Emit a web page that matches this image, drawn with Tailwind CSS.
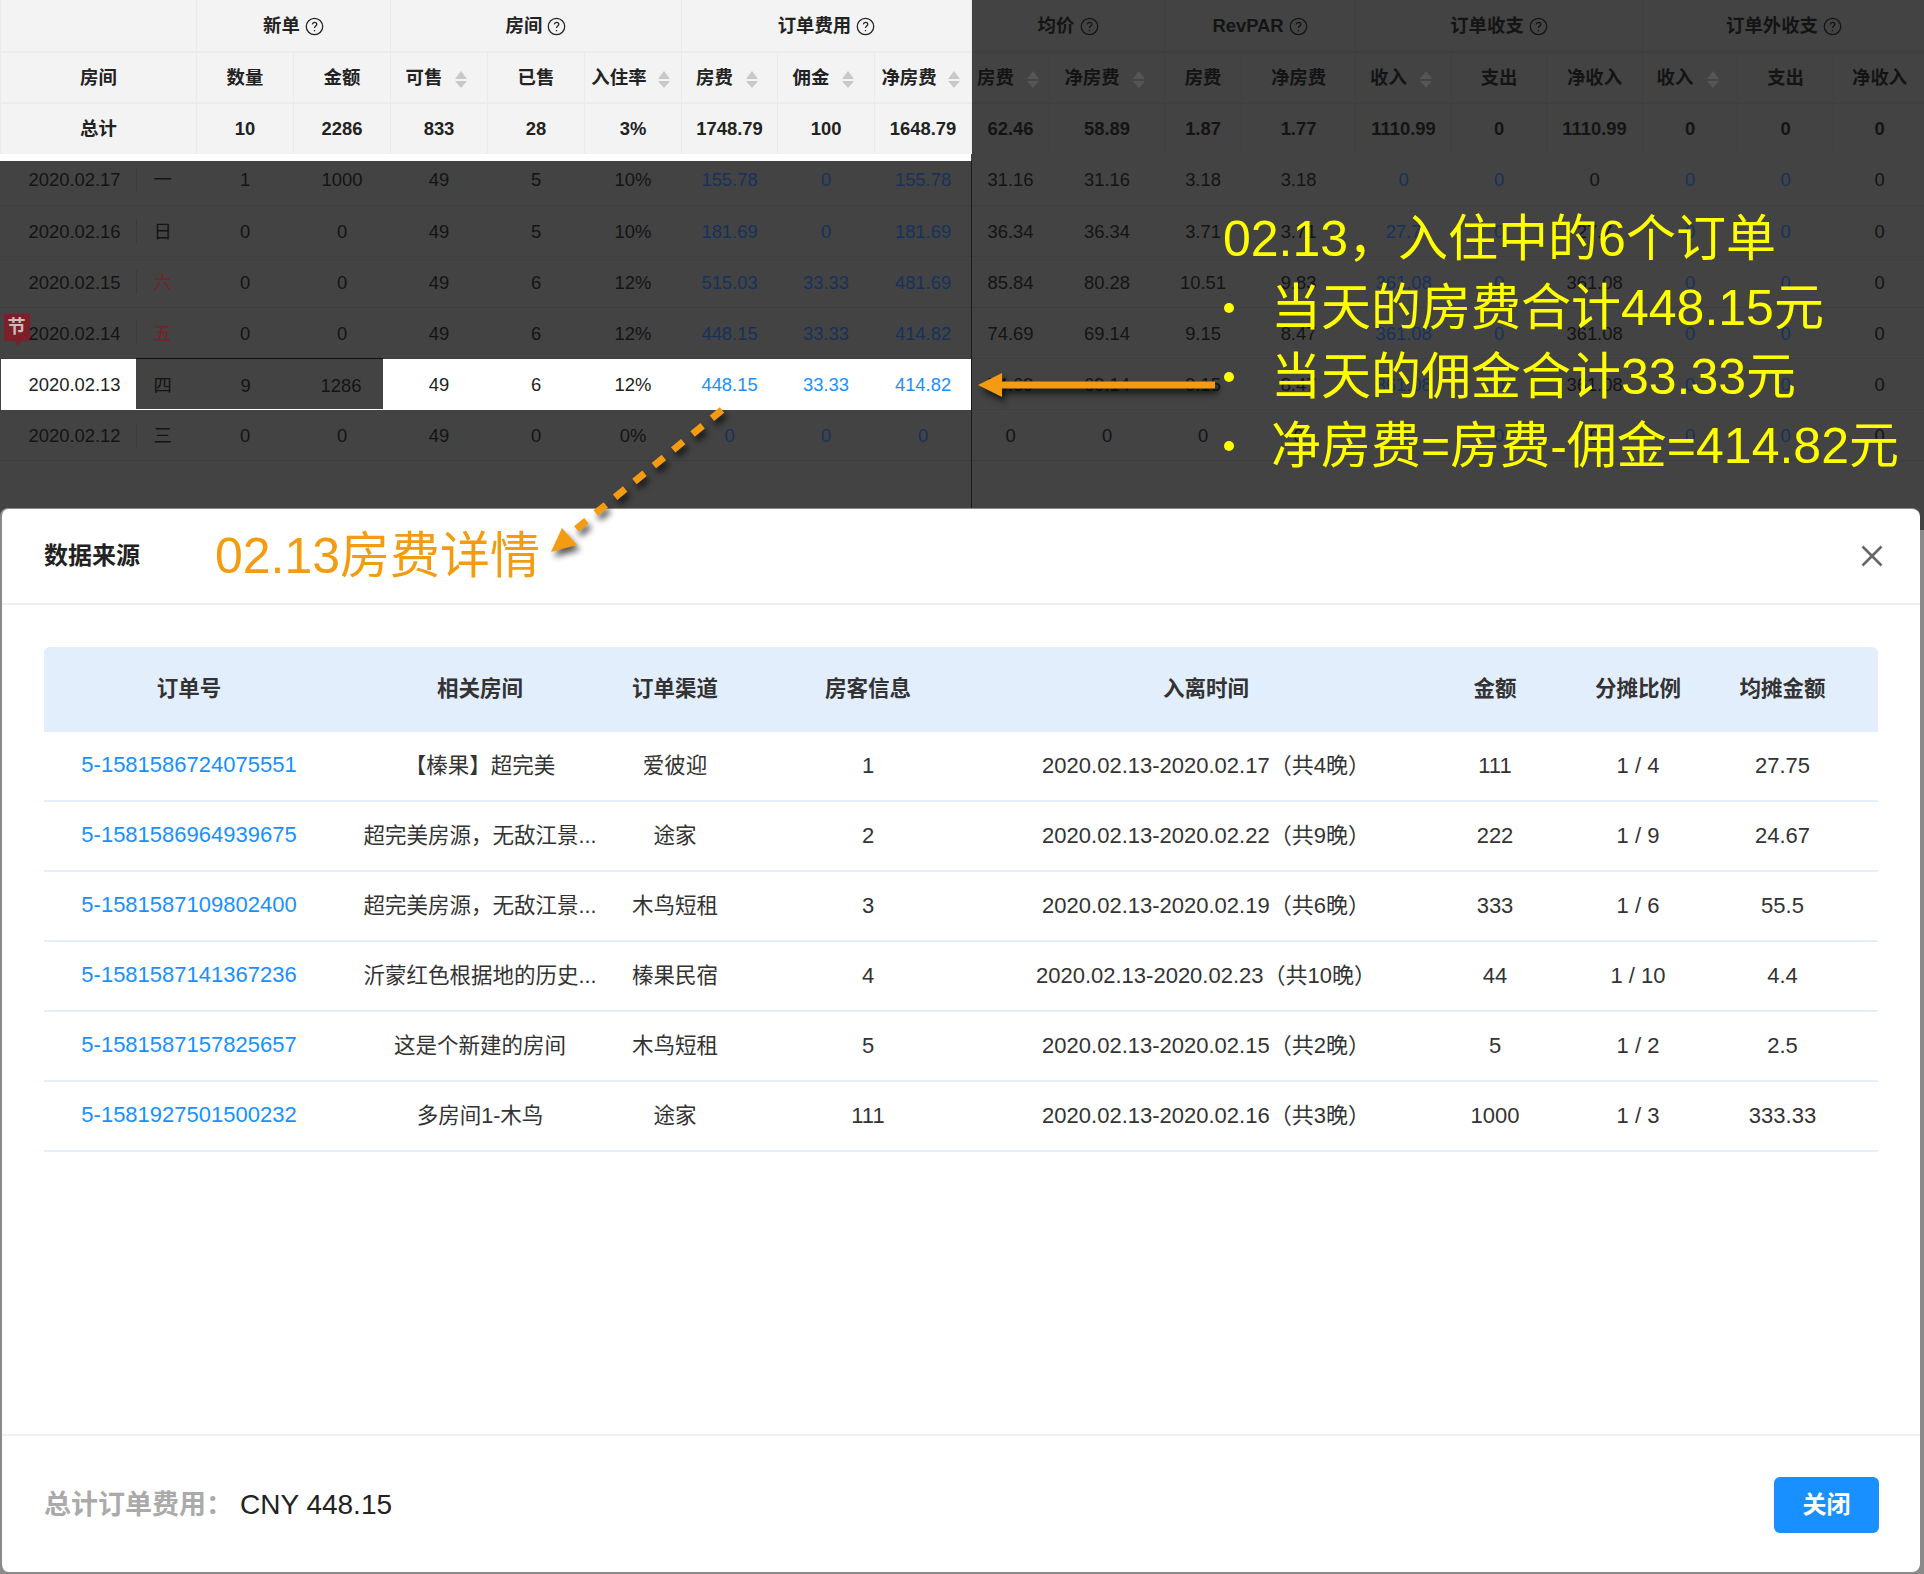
<!DOCTYPE html>
<html lang="zh">
<head>
<meta charset="utf-8">
<script src="https://cdn.jsdelivr.net/npm/@tailwindcss/browser@4"></script>
<title>数据来源</title>
</head>
<body class="bg-white font-['Liberation_Sans','Noto_Sans_CJK_SC',sans-serif]">
<div class="relative w-[1924px] h-[1574px] overflow-hidden bg-[#434343]">

  <!-- report table -->
  <table class="w-[1924px] table-fixed border-collapse text-center text-[18.4px] text-[#141414]">
    <colgroup>
      <col class="w-[196px]"><col class="w-[97px]"><col class="w-[97px]"><col class="w-[97px]"><col class="w-[97px]"><col class="w-[97px]"><col class="w-[96px]"><col class="w-[97px]"><col class="w-[97px]">
      <col class="w-[78px]"><col class="w-[115px]"><col class="w-[77px]"><col class="w-[114px]"><col class="w-[96px]"><col class="w-[95px]"><col class="w-[96px]"><col class="w-[95px]"><col class="w-[96px]"><col class="w-[92px]">
    </colgroup>
    <thead class="font-bold">
      <tr class="h-[52px] [&>th]:border-x [&>th]:border-b-2 [&>th:nth-child(-n+4)]:bg-[#f3f3f3] [&>th:nth-child(-n+4)]:border-[#ebebeb] [&>th:nth-child(n+5)]:border-[#3f3f3f] [&>th:nth-child(-n+4)]:text-[#222]">
        <th></th>
        <th colspan="2">新单 <svg class="inline-block w-[19px] h-[19px] align-[-4px]" viewBox="0 0 18 18" fill="none" stroke="currentColor" stroke-width="1.2"><circle cx="9" cy="9" r="7.8"/><path d="M6.9 7c.2-1.3 1-2 2.2-2 1.2 0 2.1.8 2.1 1.9 0 1.7-2.2 1.7-2.2 3.6M9 12.2v1.2"/></svg></th>
        <th colspan="3">房间 <svg class="inline-block w-[19px] h-[19px] align-[-4px]" viewBox="0 0 18 18" fill="none" stroke="currentColor" stroke-width="1.2"><circle cx="9" cy="9" r="7.8"/><path d="M6.9 7c.2-1.3 1-2 2.2-2 1.2 0 2.1.8 2.1 1.9 0 1.7-2.2 1.7-2.2 3.6M9 12.2v1.2"/></svg></th>
        <th colspan="3">订单费用 <svg class="inline-block w-[19px] h-[19px] align-[-4px]" viewBox="0 0 18 18" fill="none" stroke="currentColor" stroke-width="1.2"><circle cx="9" cy="9" r="7.8"/><path d="M6.9 7c.2-1.3 1-2 2.2-2 1.2 0 2.1.8 2.1 1.9 0 1.7-2.2 1.7-2.2 3.6M9 12.2v1.2"/></svg></th>
        <th colspan="2">均价 <svg class="inline-block w-[19px] h-[19px] align-[-4px]" viewBox="0 0 18 18" fill="none" stroke="currentColor" stroke-width="1.2"><circle cx="9" cy="9" r="7.8"/><path d="M6.9 7c.2-1.3 1-2 2.2-2 1.2 0 2.1.8 2.1 1.9 0 1.7-2.2 1.7-2.2 3.6M9 12.2v1.2"/></svg></th>
        <th colspan="2">RevPAR <svg class="inline-block w-[19px] h-[19px] align-[-4px]" viewBox="0 0 18 18" fill="none" stroke="currentColor" stroke-width="1.2"><circle cx="9" cy="9" r="7.8"/><path d="M6.9 7c.2-1.3 1-2 2.2-2 1.2 0 2.1.8 2.1 1.9 0 1.7-2.2 1.7-2.2 3.6M9 12.2v1.2"/></svg></th>
        <th colspan="3">订单收支 <svg class="inline-block w-[19px] h-[19px] align-[-4px]" viewBox="0 0 18 18" fill="none" stroke="currentColor" stroke-width="1.2"><circle cx="9" cy="9" r="7.8"/><path d="M6.9 7c.2-1.3 1-2 2.2-2 1.2 0 2.1.8 2.1 1.9 0 1.7-2.2 1.7-2.2 3.6M9 12.2v1.2"/></svg></th>
        <th colspan="3">订单外收支 <svg class="inline-block w-[19px] h-[19px] align-[-4px]" viewBox="0 0 18 18" fill="none" stroke="currentColor" stroke-width="1.2"><circle cx="9" cy="9" r="7.8"/><path d="M6.9 7c.2-1.3 1-2 2.2-2 1.2 0 2.1.8 2.1 1.9 0 1.7-2.2 1.7-2.2 3.6M9 12.2v1.2"/></svg></th>
      </tr>
      <tr class="h-[51px] [&>th]:border-x [&>th]:border-b-2 [&>th:nth-child(-n+9)]:bg-[#f3f3f3] [&>th:nth-child(-n+9)]:border-[#ebebeb] [&>th:nth-child(n+10)]:border-[#3f3f3f] [&>th:nth-child(-n+9)]:text-[#222] [&>th]:whitespace-nowrap [&>th]:font-bold">
        <th>房间</th><th>数量</th><th>金额</th>
        <th>可售 <span class="inline-block ml-2 mr-[5px] align-[-4px] text-[0]"><span class="block border-x-[6px] border-b-[8px] border-x-transparent border-b-[#c8c8c8] mb-[2px]"></span><span class="block border-x-[6px] border-t-[7px] border-x-transparent border-t-[#c8c8c8]"></span></span></th>
        <th>已售</th>
        <th>入住率 <span class="inline-block ml-1.5 mr-[5px] align-[-4px] text-[0]"><span class="block border-x-[6px] border-b-[8px] border-x-transparent border-b-[#c8c8c8] mb-[2px]"></span><span class="block border-x-[6px] border-t-[7px] border-x-transparent border-t-[#c8c8c8]"></span></span></th>
        <th>房费 <span class="inline-block ml-2 mr-[5px] align-[-4px] text-[0]"><span class="block border-x-[6px] border-b-[8px] border-x-transparent border-b-[#c8c8c8] mb-[2px]"></span><span class="block border-x-[6px] border-t-[7px] border-x-transparent border-t-[#c8c8c8]"></span></span></th>
        <th>佣金 <span class="inline-block ml-2 mr-[5px] align-[-4px] text-[0]"><span class="block border-x-[6px] border-b-[8px] border-x-transparent border-b-[#c8c8c8] mb-[2px]"></span><span class="block border-x-[6px] border-t-[7px] border-x-transparent border-t-[#c8c8c8]"></span></span></th>
        <th>净房费 <span class="inline-block ml-1.5 mr-[5px] align-[-4px] text-[0]"><span class="block border-x-[6px] border-b-[8px] border-x-transparent border-b-[#c8c8c8] mb-[2px]"></span><span class="block border-x-[6px] border-t-[7px] border-x-transparent border-t-[#c8c8c8]"></span></span></th>
        <th>房费 <span class="inline-block ml-2 mr-[5px] align-[-4px] text-[0]"><span class="block border-x-[6px] border-b-[8px] border-x-transparent border-b-[#555] mb-[2px]"></span><span class="block border-x-[6px] border-t-[7px] border-x-transparent border-t-[#555]"></span></span></th>
        <th>净房费 <span class="inline-block ml-2 mr-[5px] align-[-4px] text-[0]"><span class="block border-x-[6px] border-b-[8px] border-x-transparent border-b-[#555] mb-[2px]"></span><span class="block border-x-[6px] border-t-[7px] border-x-transparent border-t-[#555]"></span></span></th>
        <th>房费</th><th>净房费</th>
        <th>收入 <span class="inline-block ml-2 mr-[5px] align-[-4px] text-[0]"><span class="block border-x-[6px] border-b-[8px] border-x-transparent border-b-[#555] mb-[2px]"></span><span class="block border-x-[6px] border-t-[7px] border-x-transparent border-t-[#555]"></span></span></th>
        <th>支出</th><th>净收入</th>
        <th>收入 <span class="inline-block ml-2 mr-[5px] align-[-4px] text-[0]"><span class="block border-x-[6px] border-b-[8px] border-x-transparent border-b-[#555] mb-[2px]"></span><span class="block border-x-[6px] border-t-[7px] border-x-transparent border-t-[#555]"></span></span></th>
        <th>支出</th><th>净收入</th>
      </tr>
      <tr class="h-[51px] [&>th]:border-x [&>th:nth-child(-n+9)]:bg-[#f3f3f3] [&>th:nth-child(-n+9)]:border-[#ebebeb] [&>th:nth-child(n+10)]:border-[#3f3f3f] [&>th:nth-child(-n+9)]:text-[#222]">
        <th>总计</th><th>10</th><th>2286</th><th>833</th><th>28</th><th>3%</th><th>1748.79</th><th>100</th><th>1648.79</th>
        <th>62.46</th><th>58.89</th><th>1.87</th><th>1.77</th><th>1110.99</th><th>0</th><th>1110.99</th><th>0</th><th>0</th><th>0</th>
      </tr>
    </thead>
    <tbody class="[&_tr]:h-[51px] [&_tr]:border-b [&_tr]:border-[#3e3e3e] [&_td]:pt-[2px] [&_.a]:text-[#16325c]">
      <tr>
        <td class="relative"><span class="absolute left-[28px] top-[12px]">2020.02.17</span><span class="absolute left-[135px] top-[13px] h-[24px] border-l border-[#3a3a3a]"></span><span class="absolute left-[153px] top-[12px]">一</span></td>
        <td>1</td><td>1000</td><td>49</td><td>5</td><td>10%</td><td class="a">155.78</td><td class="a">0</td><td class="a">155.78</td>
        <td>31.16</td><td>31.16</td><td>3.18</td><td>3.18</td><td class="a">0</td><td class="a">0</td><td>0</td><td class="a">0</td><td class="a">0</td><td>0</td>
      </tr>
      <tr>
        <td class="relative"><span class="absolute left-[28px] top-[12px]">2020.02.16</span><span class="absolute left-[135px] top-[13px] h-[24px] border-l border-[#3a3a3a]"></span><span class="absolute left-[153px] top-[12px]">日</span></td>
        <td>0</td><td>0</td><td>49</td><td>5</td><td>10%</td><td class="a">181.69</td><td class="a">0</td><td class="a">181.69</td>
        <td>36.34</td><td>36.34</td><td>3.71</td><td>3.71</td><td class="a">27.7</td><td class="a">0</td><td>27.7</td><td class="a">0</td><td class="a">0</td><td>0</td>
      </tr>
      <tr>
        <td class="relative"><span class="absolute left-[28px] top-[12px]">2020.02.15</span><span class="absolute left-[135px] top-[13px] h-[24px] border-l border-[#3a3a3a]"></span><span class="absolute left-[153px] top-[12px] text-[#7b2028]">六</span></td>
        <td>0</td><td>0</td><td>49</td><td>6</td><td>12%</td><td class="a">515.03</td><td class="a">33.33</td><td class="a">481.69</td>
        <td>85.84</td><td>80.28</td><td>10.51</td><td>9.83</td><td class="a">361.08</td><td class="a">0</td><td>361.08</td><td class="a">0</td><td class="a">0</td><td>0</td>
      </tr>
      <tr>
        <td class="relative"><span class="absolute left-[3px] top-[6px] flex h-[27px] w-[26px] items-center justify-center rounded-[2px] bg-[#7b2028] text-[18px] font-bold leading-none text-[#c9bcbc]">节</span><span class="absolute left-[13px] top-[32px] border-x-[4px] border-t-[6px] border-x-transparent border-t-[#7b2028]"></span><span class="absolute left-[28px] top-[12px]">2020.02.14</span><span class="absolute left-[135px] top-[13px] h-[24px] border-l border-[#3a3a3a]"></span><span class="absolute left-[153px] top-[12px] text-[#7b2028]">五</span></td>
        <td>0</td><td>0</td><td>49</td><td>6</td><td>12%</td><td class="a">448.15</td><td class="a">33.33</td><td class="a">414.82</td>
        <td>74.69</td><td>69.14</td><td>9.15</td><td>8.47</td><td class="a">361.08</td><td class="a">0</td><td>361.08</td><td class="a">0</td><td class="a">0</td><td>0</td>
      </tr>
      <tr class="[&>td:nth-child(-n+9)]:bg-white [&>td:nth-child(-n+9)]:border-b [&>td:nth-child(-n+9)]:border-white">
        <td class="relative text-[#222]"><span class="absolute left-[28px] top-[12px]">2020.02.13</span><span class="absolute left-[135px] top-[-1px] z-10 h-[51px] w-[247px] border-t border-[#111] bg-[#434343] text-[#141414]"><span class="absolute left-[18px] top-[13px]">四</span><span class="absolute left-[105px] top-[13px]">9</span><span class="absolute left-[185px] top-[13px]">1286</span></span></td>
        <td></td><td></td>
        <td class="text-[#222]">49</td><td class="text-[#222]">6</td><td class="text-[#222]">12%</td><td class="text-[#1890ff]">448.15</td><td class="text-[#1890ff]">33.33</td><td class="text-[#1890ff]">414.82</td>
        <td>74.69</td><td>69.14</td><td>9.15</td><td>8.47</td><td class="a">361.08</td><td class="a">0</td><td>361.08</td><td class="a">0</td><td class="a">0</td><td>0</td>
      </tr>
      <tr>
        <td class="relative"><span class="absolute left-[28px] top-[12px]">2020.02.12</span><span class="absolute left-[135px] top-[13px] h-[24px] border-l border-[#3a3a3a]"></span><span class="absolute left-[153px] top-[12px]">三</span></td>
        <td>0</td><td>0</td><td>49</td><td>0</td><td>0%</td><td class="a">0</td><td class="a">0</td><td class="a">0</td>
        <td>0</td><td>0</td><td>0</td><td>0</td><td class="a">0</td><td class="a">0</td><td>0</td><td class="a">0</td><td class="a">0</td><td>0</td>
      </tr>
    </tbody>
  </table>

  <!-- white gap beneath the lit header, and the divider of the fixed columns -->
  <div class="absolute left-0 top-[154px] h-[7px] w-[971px] bg-white"></div>
  <div class="absolute left-[971px] top-[161px] h-[347px] border-l border-[#1a1a1a]"></div>

  <!-- grey edge that shows round the modal -->
  <div class="absolute inset-x-0 bottom-0 top-[530px] bg-[#8a8a8a]"></div>

  <!-- modal -->
  <div class="absolute left-0 top-[508px] flex h-[1064px] w-[1920px] flex-col rounded-lg border-l-2 border-t border-[#8a8a8a] bg-white">
    <div class="flex h-[96px] shrink-0 items-center border-b-2 border-[#efefef] pl-[42px] pr-[36px]">
      <h2 class="w-[171px] text-[24px] font-bold text-[#222]">数据来源</h2>
      <span class="text-[50px] text-[#f39c12]">02.13房费详情</span>
      <svg class="ml-auto h-[24px] w-[24px]" viewBox="0 0 24 24" fill="none" stroke="#666" stroke-width="2.6"><path d="M2.5 2.5l19 19M21.5 2.5l-19 19"/></svg>
    </div>
    <div class="flex-1 px-[42px] pt-[42px] text-center text-[22px] text-[#333]">
      <div class="grid h-[85px] grid-cols-[290px_292px_98px_288px_388px_190px_96px_193px] items-center rounded-t-md bg-[#e3eefc] text-[21.5px] font-bold text-[#333]">
        <div>订单号</div><div>相关房间</div><div>订单渠道</div><div>房客信息</div><div>入离时间</div><div>金额</div><div>分摊比例</div><div>均摊金额</div>
      </div>
      <div class="grid h-[70px] grid-cols-[290px_292px_98px_288px_388px_190px_96px_193px] items-center border-b-2 border-[#e6eefa] [&>div:nth-child(n+4)]:mb-[2px]">
        <div class="mb-[3px] text-[#1890ff]">5-1581586724075551</div><div class="text-[21.5px]">【榛果】超完美</div><div class="text-[21.5px]">爱彼迎</div><div>1</div><div>2020.02.13-2020.02.17（共4晚）</div><div>111</div><div>1 / 4</div><div>27.75</div>
      </div>
      <div class="grid h-[70px] grid-cols-[290px_292px_98px_288px_388px_190px_96px_193px] items-center border-b-2 border-[#e6eefa] [&>div:nth-child(n+4)]:mb-[2px]">
        <div class="mb-[3px] text-[#1890ff]">5-1581586964939675</div><div class="text-[21.5px]">超完美房源，无敌江景...</div><div class="text-[21.5px]">途家</div><div>2</div><div>2020.02.13-2020.02.22（共9晚）</div><div>222</div><div>1 / 9</div><div>24.67</div>
      </div>
      <div class="grid h-[70px] grid-cols-[290px_292px_98px_288px_388px_190px_96px_193px] items-center border-b-2 border-[#e6eefa] [&>div:nth-child(n+4)]:mb-[2px]">
        <div class="mb-[3px] text-[#1890ff]">5-1581587109802400</div><div class="text-[21.5px]">超完美房源，无敌江景...</div><div class="text-[21.5px]">木鸟短租</div><div>3</div><div>2020.02.13-2020.02.19（共6晚）</div><div>333</div><div>1 / 6</div><div>55.5</div>
      </div>
      <div class="grid h-[70px] grid-cols-[290px_292px_98px_288px_388px_190px_96px_193px] items-center border-b-2 border-[#e6eefa] [&>div:nth-child(n+4)]:mb-[2px]">
        <div class="mb-[3px] text-[#1890ff]">5-1581587141367236</div><div class="text-[21.5px]">沂蒙红色根据地的历史...</div><div class="text-[21.5px]">榛果民宿</div><div>4</div><div>2020.02.13-2020.02.23（共10晚）</div><div>44</div><div>1 / 10</div><div>4.4</div>
      </div>
      <div class="grid h-[70px] grid-cols-[290px_292px_98px_288px_388px_190px_96px_193px] items-center border-b-2 border-[#e6eefa] [&>div:nth-child(n+4)]:mb-[2px]">
        <div class="mb-[3px] text-[#1890ff]">5-1581587157825657</div><div class="text-[21.5px]">这是个新建的房间</div><div class="text-[21.5px]">木鸟短租</div><div>5</div><div>2020.02.13-2020.02.15（共2晚）</div><div>5</div><div>1 / 2</div><div>2.5</div>
      </div>
      <div class="grid h-[70px] grid-cols-[290px_292px_98px_288px_388px_190px_96px_193px] items-center border-b-2 border-[#e6eefa] [&>div:nth-child(n+4)]:mb-[2px]">
        <div class="mb-[3px] text-[#1890ff]">5-1581927501500232</div><div class="text-[21.5px]">多房间1-木鸟</div><div class="text-[21.5px]">途家</div><div>111</div><div>2020.02.13-2020.02.16（共3晚）</div><div>1000</div><div>1 / 3</div><div>333.33</div>
      </div>
    </div>
    <div class="flex h-[138px] shrink-0 items-center border-t-2 border-[#f0f0f0] pl-[42px] pr-[41px] pt-[2px]">
      <span class="w-[196px] text-[27px] font-bold text-[#aaa]">总计订单费用：</span>
      <span class="text-[28px] text-[#222]">CNY 448.15</span>
      <button class="ml-auto h-[56px] w-[105px] rounded-md bg-[#1890ff] text-[24px] font-bold text-white">关闭</button>
    </div>
  </div>

  <!-- annotations -->
  <div class="absolute left-[1223px] top-[205px] text-[50px] leading-[69px] text-[#ffff00]">
    <div class="whitespace-nowrap">02.13，入住中的6个订单</div>
    <ul class="whitespace-nowrap">
      <li class="relative pl-[48px]"><span class="absolute left-[1px] top-[29px] h-[10px] w-[10px] rounded-full bg-[#ffff00]"></span>当天的房费合计448.15元</li>
      <li class="relative pl-[48px]"><span class="absolute left-[1px] top-[29px] h-[10px] w-[10px] rounded-full bg-[#ffff00]"></span>当天的佣金合计33.33元</li>
      <li class="relative pl-[48px]"><span class="absolute left-[1px] top-[29px] h-[10px] w-[10px] rounded-full bg-[#ffff00]"></span>净房费=房费-佣金=414.82元</li>
    </ul>
  </div>
  <svg class="pointer-events-none absolute left-0 top-0 h-[1574px] w-[1924px] drop-shadow-[3px_5px_3px_rgba(0,0,0,0.65)]" viewBox="0 0 1924 1574" fill="#f39c12" stroke="#f39c12">
    <path d="M1215 385H1000" stroke-width="7"/>
    <path d="M978 385l24-12v24z" stroke="none"/>
    <path d="M722 410L575 530" stroke-width="7" stroke-dasharray="13 12"/>
    <path d="M551 552l11-24 15 17z" stroke="none"/>
  </svg>
</div>
</body>
</html>
